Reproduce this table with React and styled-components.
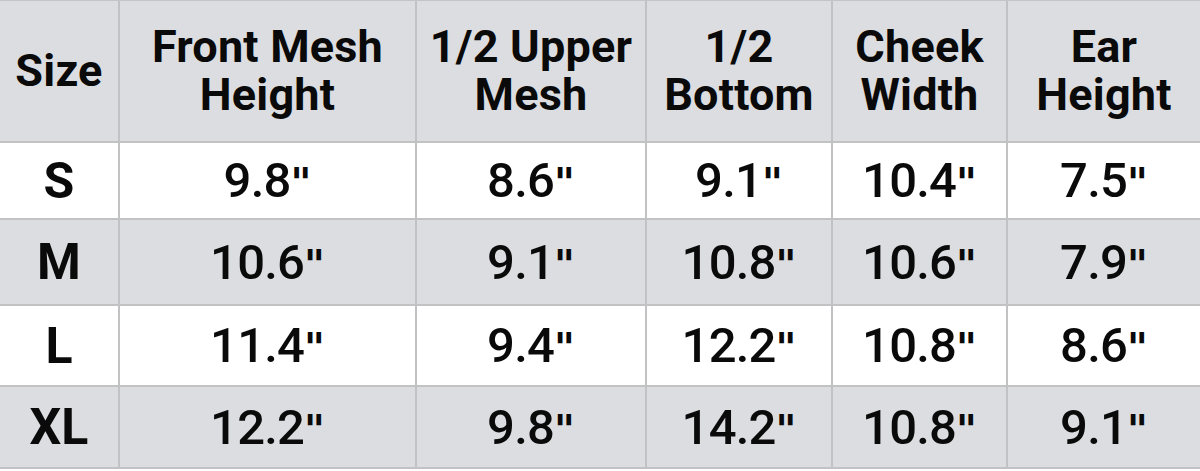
import React from 'react';
import styled, { createGlobalStyle } from 'styled-components';

const GlobalStyle = createGlobalStyle`
  html, body {
    margin: 0;
    padding: 0;
    background: #ffffff;
  }
`;

const columns = [
  { key: 'size', label: ['Size'] },
  { key: 'front', label: ['Front Mesh', 'Height'] },
  { key: 'upper', label: ['1/2 Upper', 'Mesh'] },
  { key: 'bottom', label: ['1/2', 'Bottom'] },
  { key: 'cheek', label: ['Cheek', 'Width'] },
  { key: 'ear', label: ['Ear', 'Height'] },
];

// values in inches
const rows = [
  ['S', '9.8', '8.6', '9.1', '10.4', '7.5'],
  ['M', '10.6', '9.1', '10.8', '10.6', '7.9'],
  ['L', '11.4', '9.4', '12.2', '10.8', '8.6'],
  ['XL', '12.2', '9.8', '14.2', '10.8', '9.1'],
];

const SizeTable = styled.div`
  display: grid;
  grid-template-columns: 120px 297px 230px 186px 175px 192px;
  grid-template-rows: 142px 77px 86px 81px 82px;
  width: 1200px;
  border-top: 1px solid #c4c4c6;
  font-family: Roboto, 'Liberation Sans', sans-serif;
  color: #0a0a0a;
`;

const Cell = styled.div`
  display: flex;
  flex-direction: column;
  align-items: center;
  justify-content: center;
  text-align: center;
  background: ${(p) => (p.$shaded ? '#dcdde0' : '#ffffff')};
  border-bottom: 2px solid #c2c2c4;
  border-right: ${(p) => (p.$last ? 'none' : '2px solid #c2c2c4')};
`;

const HeadLine = styled.span`
  font-size: 45px;
  line-height: 48px;
  font-weight: 700;
  letter-spacing: 0.2px;
`;

const SizeLabel = styled.span`
  font-size: 50px;
  font-weight: 700;
  line-height: 1;
`;

const Value = styled.span`
  font-size: 49px;
  font-weight: 500;
  line-height: 1;
  letter-spacing: -0.8px;
  white-space: nowrap;
`;

const Inch = styled.span`
  font-family: 'DejaVu Sans', sans-serif;
  font-weight: 700;
  font-size: 40px;
  letter-spacing: 0;
`;

export default function App() {
  return (
    <>
      <GlobalStyle />
      <SizeTable>
        {columns.map((col, i) => (
          <Cell key={col.key} $shaded $last={i === columns.length - 1}>
            {col.label.map((line) => (
              <HeadLine key={line}>{line}</HeadLine>
            ))}
          </Cell>
        ))}
        {rows.map((row, r) =>
          row.map((val, i) => (
            <Cell key={`${r}-${i}`} $shaded={r % 2 === 1} $last={i === row.length - 1}>
              {i === 0 ? (
                <SizeLabel>{val}</SizeLabel>
              ) : (
                <Value>
                  {val}
                  <Inch>"</Inch>
                </Value>
              )}
            </Cell>
          ))
        )}
      </SizeTable>
    </>
  );
}
